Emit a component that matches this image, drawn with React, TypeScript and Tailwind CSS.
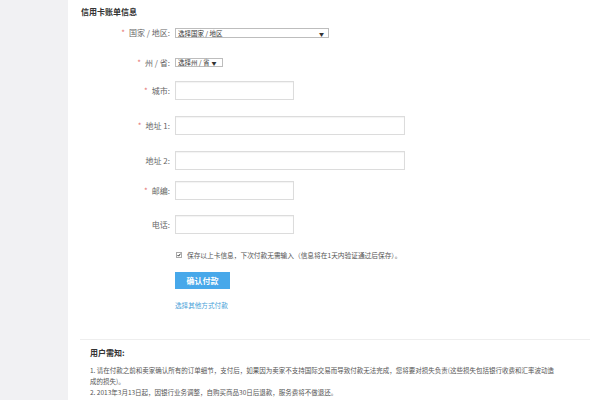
import React from 'react'

const FONT = { fontFamily: '"Noto Sans CJK SC", "Noto Sans", sans-serif' }

function Label({ text, required }: { text: string; required?: boolean }) {
  return (
    <div className="w-[102px] shrink-0 flex justify-end items-center text-[8px] leading-none text-[#666]">
      {required && <span className="mr-[4px] text-[#e57373]">*</span>}
      <span className="whitespace-pre">{text}</span>
    </div>
  )
}

function TextBox({ wide }: { wide?: boolean }) {
  return (
    <input
      type="text"
      className={`${wide ? 'w-[230px]' : 'w-[119px]'} h-[19px] border border-[#dcdcdc] bg-white shadow-[inset_0_1px_1px_rgba(0,0,0,0.05)] outline-none`}
    />
  )
}

function CheckIcon() {
  return (
    <svg viewBox="0 0 6 6" className="w-[6px] h-[6px]">
      <path d="M0.8 3 L2.4 4.7 L5.3 1" fill="none" stroke="#222" strokeWidth="1.4" />
    </svg>
  )
}

export default function App() {
  return (
    <div className="w-[600px] h-[400px] overflow-hidden flex bg-white" style={FONT}>
      <div className="w-[68px] shrink-0 bg-[#f1f1f3]" />

      <div className="flex-1 flex flex-col">
        <h3 className="mt-[8px] ml-[13px] text-[8px] leading-[8px] font-bold text-[#333]">信用卡账单信息</h3>

        {/* form */}
        <div className="flex flex-col">
          <div className="mt-[12px] flex items-center gap-[5px]">
            <Label text="国家 / 地区:" required />
            <div className="w-[154px] h-[10px] border border-[#bdbdbd] bg-white flex items-center justify-between px-[2px] text-[6.5px] leading-none text-[#333]">
              <span>选择国家 / 地区</span>
              <span className="text-[5px] mr-[2px]">▼</span>
            </div>
          </div>

          <div className="mt-[20px] flex items-center gap-[5px]">
            <Label text="州 / 省:" required />
            <div className="w-[48px] h-[9px] border border-[#bdbdbd] bg-white flex items-center px-[2px] gap-[2px] text-[6.5px] leading-none text-[#333]">
              <span>选择州 / 省</span>
              <span className="text-[5px]">▼</span>
            </div>
          </div>

          <div className="mt-[14px] flex items-center gap-[5px]">
            <Label text="城市:" required />
            <TextBox />
          </div>

          <div className="mt-[16px] flex items-center gap-[5px]">
            <Label text="地址 1:" required />
            <TextBox wide />
          </div>

          <div className="mt-[16px] flex items-center gap-[5px]">
            <Label text="地址 2:" />
            <TextBox wide />
          </div>

          <div className="mt-[11px] flex items-center gap-[5px]">
            <Label text="邮编:" required />
            <TextBox />
          </div>

          <div className="mt-[15px] flex items-center gap-[5px]">
            <Label text="电话:" />
            <TextBox />
          </div>

          <div className="mt-[17px] ml-[108px] h-[8px] flex items-center gap-[5px]">
            <div className="w-[6px] h-[6px] border border-[#aaa] bg-white flex items-center justify-center">
              <CheckIcon />
            </div>
            <span className="text-[6.7px] leading-none text-[#555] whitespace-nowrap">
              保存以上卡信息，下次付款无需输入（信息将在1天内验证通过后保存）。
            </span>
          </div>

          <button className="mt-[13px] ml-[107px] w-[55px] h-[17px] bg-[#47a8ea] text-white text-[8px] font-bold leading-none flex items-center justify-center">
            确认付款
          </button>

          <a className="mt-[12px] ml-[107px] h-[8px] text-[6.6px] leading-[8px] text-[#4a9fd8] cursor-pointer">
            选择其他方式付款
          </a>
        </div>

        <div className="mt-[30px] ml-[12px] mr-[10px] border-t border-[#eeeeee]" />

        {/* notice */}
        <div className="ml-[22px] mr-[30px]">
          <h4 className="mt-[9px] text-[8px] leading-[8px] font-bold text-[#333]">用户需知:</h4>
          <p className="mt-[8px] text-[6.5px] leading-[11px] text-[#555] whitespace-nowrap">
            1. 请在付款之前和卖家确认所有的订单细节，支付后，如果因为卖家不支持国际交易而导致付款无法完成，您将要对损失负责(这些损失包括银行收费和汇率波动造
            <br />
            成的损失)。
            <br />
            2. 2013年3月13日起，因银行业务调整，自购买商品30日后退款，服务费将不做退还。
          </p>
        </div>
      </div>
    </div>
  )
}
